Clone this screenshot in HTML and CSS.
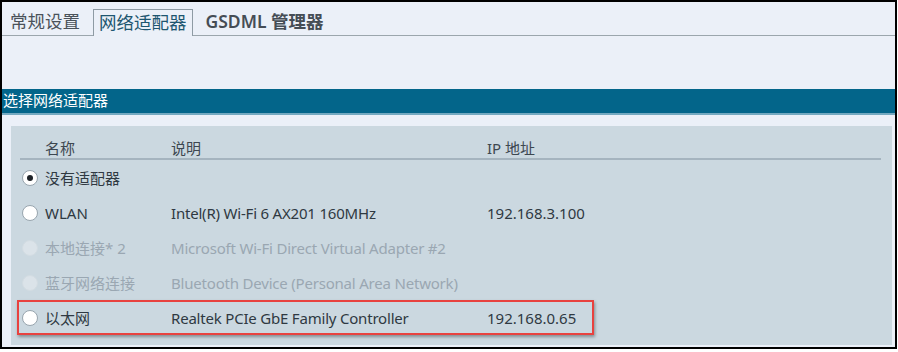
FILE: index.html
```html
<!DOCTYPE html>
<html lang="zh-CN">
<head>
    <meta charset="UTF-8">
    <title>网络适配器</title>
    <link rel="stylesheet" href="styles.css">
</head>
<body>
    <div class="frame">
        <div class="tabs">
            <div class="tab">常规设置</div>
            <div class="tab active">网络适配器</div>
            <div class="tab strong">GSDML 管理器</div>
        </div>

        <div class="section-title">选择网络适配器</div>

        <div class="panel">
            <div class="grid head">
                <span></span>
                <span>名称</span>
                <span>说明</span>
                <span>IP 地址</span>
            </div>

            <div class="grid row">
                <span class="radio checked"></span>
                <span>没有适配器</span>
                <span></span>
                <span></span>
            </div>
            <div class="grid row">
                <span class="radio"></span>
                <span>WLAN</span>
                <span class="desc">Intel(R) Wi-Fi 6 AX201 160MHz</span>
                <span>192.168.3.100</span>
            </div>
            <div class="grid row disabled">
                <span class="radio"></span>
                <span>本地连接* 2</span>
                <span class="desc">Microsoft Wi-Fi Direct Virtual Adapter #2</span>
                <span></span>
            </div>
            <div class="grid row disabled">
                <span class="radio"></span>
                <span>蓝牙网络连接</span>
                <span class="desc">Bluetooth Device (Personal Area Network)</span>
                <span></span>
            </div>
            <div class="grid row marked">
                <span class="radio"></span>
                <span>以太网</span>
                <span class="desc">Realtek PCIe GbE Family Controller</span>
                <span>192.168.0.65</span>
                <div class="highlight"></div>
            </div>
        </div>
    </div>
</body>
</html>
```

FILE: styles.css
```css
:root {
    --page-bg: #ebf0f8;
    --panel-bg: #cbd8e0;
    --teal: #03658a;
    --text: #2f3942;
    --muted: #9aa7b2;
}
* {
    margin: 0;
    padding: 0;
    box-sizing: border-box;
}
body {
    background: #fff;
    font-family: "Noto Sans", "Noto Sans CJK SC", sans-serif;
    color: var(--text);
}
.frame {
    width: 897px;
    height: 349px;
    border: 2px solid #000;
    background: var(--page-bg);
}
.tabs {
    display: flex;
    align-items: flex-end;
    height: 34px;
    padding-left: 3px;
    border-bottom: 1px solid #9ba6ad;
}
.tab {
    height: 26px;
    padding: 0 5px;
    margin-right: 8px;
    font-size: 17.5px;
    line-height: 24px;
    color: #4a525a;
}
.tab.active {
    height: 27px;
    margin-right: 6px;
    margin-bottom: -1px;
    border: 1px solid #8e9ba4;
    border-bottom: none;
    background: var(--page-bg);
    color: #1d5670;
}
.tab.strong {
    margin-left: 2px;
    font-weight: 600;
    color: #454d55;
}
.section-title {
    margin-top: 53px;
    height: 26px;
    padding-left: 1px;
    background: var(--teal);
    border-bottom: 2px solid #74a9c0;
    color: #fff;
    font-size: 15px;
    line-height: 23px;
}
.panel {
    height: 219px;
    margin: 11px 3px 0 9px;
    padding: 0 11px 0 9px;
    background: var(--panel-bg);
}
.grid {
    display: grid;
    grid-template-columns: 25px 126px 316px 1fr;
    align-items: center;
    font-size: 15px;
}
.head {
    height: 34px;
    padding-top: 10px;
    border-bottom: 2px solid #a5b4bf;
    color: #3d4750;
}
.row {
    position: relative;
    height: 35px;
}
.row:first-of-type {
    margin-top: 1px;
}
.desc {
    letter-spacing: -0.2px;
}
.radio {
    width: 16px;
    height: 16px;
    margin-left: 2px;
    border-radius: 50%;
    background: #fff;
    border: 1px solid #98a5ae;
    position: relative;
}
.radio.checked::after {
    content: '';
    position: absolute;
    left: 4px;
    top: 4px;
    width: 6px;
    height: 6px;
    border-radius: 50%;
    background: #1e2328;
}
.disabled {
    color: var(--muted);
}
.disabled .radio {
    background: #dbe3e9;
    border-color: #d3dce2;
}
.highlight {
    position: absolute;
    left: -3px;
    top: 0;
    width: 577px;
    height: 35px;
    border: 2px solid #e8423f;
    box-shadow: 1px 2px 3px rgba(0, 0, 0, 0.35);
    pointer-events: none;
}
```
